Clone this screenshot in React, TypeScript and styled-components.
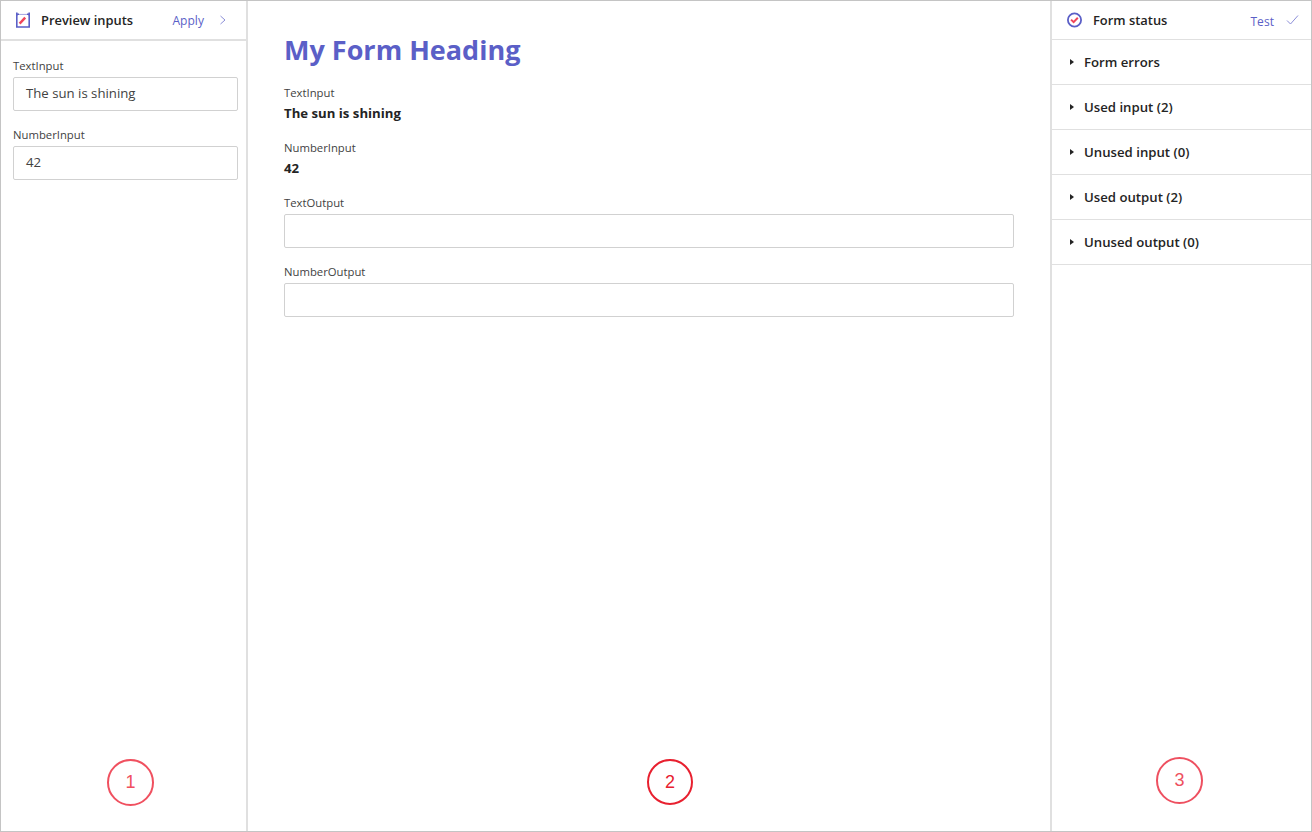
import React from 'react'
import styled, { createGlobalStyle } from 'styled-components'

const GlobalStyle = createGlobalStyle`
  html, body {
    margin: 0;
    padding: 0;
    background: #fff;
    font-family: 'Open Sans', 'Noto Sans', sans-serif;
    color: #242424;
  }
`

const Frame = styled.div`
  position: relative;
  box-sizing: border-box;
  width: 1312px;
  height: 832px;
  border: 1px solid #c4c4c4;
  display: grid;
  grid-template-columns: 245px 2px 802px 2px 1fr;
  overflow: hidden;
`

const Divider = styled.div`
  background: #e0e0e0;
`

const Panel = styled.div`
  display: flex;
  flex-direction: column;
  min-width: 0;
`

const PanelHeader = styled.div<{ $thick?: boolean }>`
  box-sizing: border-box;
  display: flex;
  align-items: center;
  height: ${({ $thick }) => ($thick ? '40px' : '39px')};
  border-bottom: ${({ $thick }) => ($thick ? '2px' : '1px')} solid #e0e0e0;
  padding: ${({ $thick }) => ($thick ? '0 19px 1px 15px' : '0 12px 0 15px')};
`

const PanelTitle = styled.span`
  margin-left: 11px;
  font-size: 12.9px;
  font-weight: 600;
  color: #242424;
  flex: 1;
`

const HeaderAction = styled.span<{ $gap: number }>`
  padding-top: 2px;
  font-size: 12px;
  letter-spacing: 0.05px;
  color: #5b5fc7;
  margin-right: ${({ $gap }) => $gap}px;
`

const InputsBody = styled.div`
  padding: 17px 8px 0 12px;
`

const Field = styled.div`
  margin-bottom: 16px;
`

const Label = styled.div`
  font-size: 11.3px;
  line-height: 16px;
  height: 16px;
  margin-bottom: 3px;
  color: #424242;
`

const TextBox = styled.div`
  box-sizing: border-box;
  height: 34px;
  border: 1px solid #d1d1d1;
  border-radius: 2px;
  padding: 0 12px 2px;
  display: flex;
  align-items: center;
  font-size: 13.2px;
  color: #424242;
`

const Canvas = styled.div`
  padding: 0 36px;
`

const CanvasInner = styled.div`
  width: 730px;
`

const Heading = styled.h1`
  margin: 0;
  padding-top: 30px;
  height: 44px;
  line-height: 38px;
  font-size: 27px;
  font-weight: 700;
  color: #5b5fc7;
`

const ReadOnlyField = styled.div`
  height: 55px;
`

const ReadOnlyValue = styled.div`
  margin-top: 2px;
  font-size: 13.2px;
  line-height: 18px;
  font-weight: 700;
  color: #242424;
`

const FormFields = styled.div`
  padding-top: 10px;
`

const SectionRow = styled.div`
  box-sizing: border-box;
  height: 45px;
  display: flex;
  align-items: center;
  padding-left: 18px;
  border-bottom: 1px solid #e0e0e0;
  font-size: 13.2px;
  font-weight: 600;
  color: #242424;
`

const Caret = styled.span`
  width: 0;
  height: 0;
  border-left: 4px solid #242424;
  border-top: 3.5px solid transparent;
  border-bottom: 3.5px solid transparent;
  margin-right: 10px;
`

const Callout = styled.div<{ $left: number; $top: number; $size: number; $color: string }>`
  position: absolute;
  box-sizing: border-box;
  left: ${({ $left }) => $left}px;
  top: ${({ $top }) => $top}px;
  width: ${({ $size }) => $size}px;
  height: ${({ $size }) => $size}px;
  border-radius: 50%;
  border: 2px solid ${({ $color }) => $color};
  color: ${({ $color }) => $color};
  display: flex;
  align-items: center;
  justify-content: center;
  font-family: 'Liberation Sans', sans-serif;
  font-size: 18px;
`

function ClipboardIcon() {
  return (
    <svg width="14" height="16" viewBox="1 0 14 16">
      <path d="M1.8 2.2h12.4v12.8H1.8z" fill="none" stroke="#5b5fc7" strokeWidth="1.6" />
      <path d="M4 0h8v2.6H4z" fill="#fff" />
      <path d="M4 2.4h8" stroke="#a9abe3" strokeWidth="1" />
      <path d="M1.8 0.6v3M14.2 0.6v3" stroke="#5b5fc7" strokeWidth="1.6" />
      <path d="M4.6 11.6l5.6-6" stroke="#f0455a" strokeWidth="2.4" />
    </svg>
  )
}

function StatusIcon() {
  return (
    <svg width="15" height="16" viewBox="0.5 0 15 16">
      <circle cx="8" cy="8" r="6.6" fill="none" stroke="#5b5fc7" strokeWidth="1.8" />
      <path d="M4.6 7.6l2.5 2.5 4.2-4.4" fill="none" stroke="#f0455a" strokeWidth="2" />
    </svg>
  )
}

function ChevronIcon() {
  return (
    <svg width="8" height="10" viewBox="0 0 8 10">
      <path d="M1.5 1l4.5 4-4.5 4" fill="none" stroke="#8b8ed8" strokeWidth="1" />
    </svg>
  )
}

function CheckIcon() {
  return (
    <svg width="13" height="10" viewBox="0 0 13 10">
      <path d="M1 5.5l3.5 3.5 7.5-8.5" fill="none" stroke="#8b8ed8" strokeWidth="1" />
    </svg>
  )
}

const sections = ['Form errors', 'Used input (2)', 'Unused input (0)', 'Used output (2)', 'Unused output (0)']

export default function App() {
  return (
    <Frame>
      <GlobalStyle />
      <Panel>
        <PanelHeader $thick>
          <ClipboardIcon />
          <PanelTitle>Preview inputs</PanelTitle>
          <HeaderAction $gap={15}>Apply</HeaderAction>
          <ChevronIcon />
        </PanelHeader>
        <InputsBody>
          <Field>
            <Label>TextInput</Label>
            <TextBox>The sun is shining</TextBox>
          </Field>
          <Field>
            <Label>NumberInput</Label>
            <TextBox>42</TextBox>
          </Field>
        </InputsBody>
      </Panel>
      <Divider />
      <Canvas>
        <CanvasInner>
          <Heading>My Form Heading</Heading>
          <FormFields>
            <ReadOnlyField>
              <Label>TextInput</Label>
              <ReadOnlyValue>The sun is shining</ReadOnlyValue>
            </ReadOnlyField>
            <ReadOnlyField>
              <Label>NumberInput</Label>
              <ReadOnlyValue>42</ReadOnlyValue>
            </ReadOnlyField>
            <Field>
              <Label>TextOutput</Label>
              <TextBox />
            </Field>
            <Field>
              <Label>NumberOutput</Label>
              <TextBox />
            </Field>
          </FormFields>
        </CanvasInner>
      </Canvas>
      <Divider />
      <Panel>
        <PanelHeader>
          <StatusIcon />
          <PanelTitle>Form status</PanelTitle>
          <HeaderAction $gap={12}>Test</HeaderAction>
          <CheckIcon />
        </PanelHeader>
        {sections.map((s) => (
          <SectionRow key={s}>
            <Caret />
            {s}
          </SectionRow>
        ))}
      </Panel>
      <Callout $left={106} $top={758} $size={47} $color="#f0505f">1</Callout>
      <Callout $left={646} $top={758} $size={46} $color="#e8202f">2</Callout>
      <Callout $left={1155} $top={756} $size={47} $color="#ee5060">3</Callout>
    </Frame>
  )
}
